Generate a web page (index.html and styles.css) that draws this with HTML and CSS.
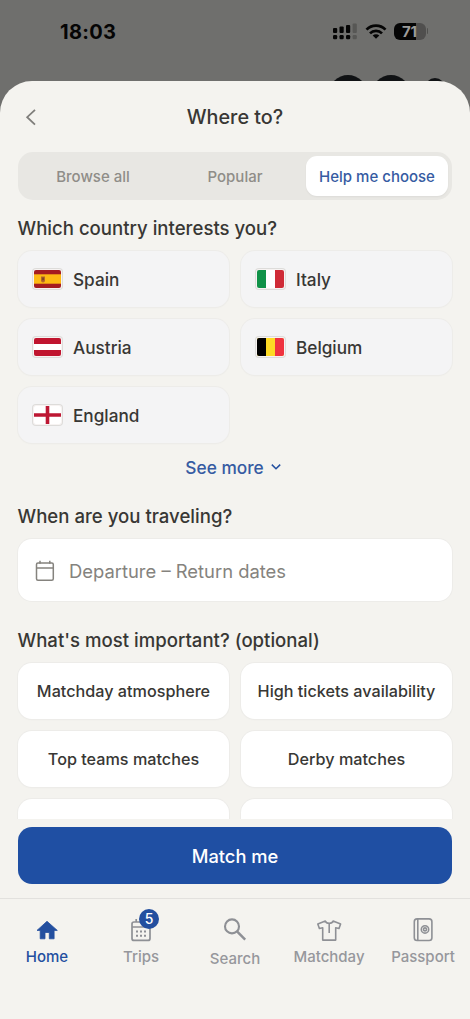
FILE: index.html
```html
<!DOCTYPE html>
<html lang="en">
<head>
<meta charset="utf-8">
<meta name="viewport" content="width=device-width, initial-scale=1">
<title>Where to?</title>
<link rel="stylesheet" href="styles.css">
</head>
<body>
<div class="phone">
  <div class="status">
    <span class="clock">18:03</span>
    <div class="status-icons">
      <svg class="signal" width="25" height="17" viewBox="0 0 25 17"><g fill="#050505"><rect x="0" y="5" width="4.2" height="5" rx="1"/><rect x="6.5" y="3.6" width="4.2" height="6.4" rx="1"/><rect x="13" y="2" width="4.2" height="8" rx="1"/><rect x="0" y="12" width="4.2" height="4.2" rx="1.2"/><rect x="6.5" y="12" width="4.2" height="4.2" rx="1.2"/><rect x="13" y="12" width="4.2" height="4.2" rx="1.2"/></g><g fill="#575755"><rect x="19.6" y="0.5" width="4.2" height="9.5" rx="1"/><rect x="19.6" y="12" width="4.2" height="4.2" rx="1.2"/></g></svg>
      <svg class="wifi" width="22" height="17" viewBox="0 0 22 17"><g fill="none" stroke="#050505" stroke-width="2.7"><path d="M1.5 6.6a13.3 13.3 0 0 1 19 0"/><path d="M5 10.4a8.4 8.4 0 0 1 12 0"/></g><path d="M11 15.8L7.7 12.6a4.6 4.6 0 0 1 6.6 0z" fill="#050505"/></svg>
      <span class="battery"><span class="battery-body">71</span><span class="battery-tip"></span></span>
    </div>
    <svg class="backdrop" width="120" height="10" viewBox="0 0 120 10"><g fill="#101214"><circle cx="18" cy="20" r="19"/><circle cx="61" cy="20" r="19"/><circle cx="105" cy="14" r="10"/></g></svg>
  </div>

  <main class="sheet">
    <header class="header">
      <svg class="back" width="12" height="18" viewBox="0 0 12 18" fill="none" stroke="#7f7e7b" stroke-width="1.8"><path d="M10 1.8L2.2 9.2L10 16.6"/></svg>
      <h1 class="title">Where to?</h1>
    </header>

    <div class="tabs">
      <button class="tab">Browse all</button>
      <button class="tab">Popular</button>
      <button class="tab tab-active">Help me choose</button>
    </div>

    <div class="content">
      <h2 class="question">Which country interests you?</h2>
      <div class="grid">
        <button class="country"><svg class="flag" viewBox="0 0 27 18"><rect width="27" height="18" fill="#a51c20"/><rect y="4.3" width="27" height="9.4" fill="#fdb913"/><path d="M7 6.5h4v4a2 2 0 0 1-4 0z" fill="#b5652b"/><path d="M8.2 7.4h1.7v2.8H8.2z" fill="#7a4324"/></svg>Spain</button>
        <button class="country"><svg class="flag" viewBox="0 0 27 18"><rect width="27" height="18" fill="#fff"/><rect width="9" height="18" fill="#109248"/><rect x="18" width="9" height="18" fill="#cf2b37"/></svg>Italy</button>
        <button class="country"><svg class="flag" viewBox="0 0 27 18"><rect width="27" height="18" fill="#c0152f"/><rect y="6" width="27" height="6" fill="#fff"/></svg>Austria</button>
        <button class="country"><svg class="flag" viewBox="0 0 27 18"><rect width="27" height="18" fill="#fdda25"/><rect width="9" height="18" fill="#000"/><rect x="18" width="9" height="18" fill="#ef3340"/></svg>Belgium</button>
        <button class="country"><svg class="flag" viewBox="0 0 27 18"><rect width="27" height="18" fill="#fff"/><path d="M11.7 0h3.6v7.2H27v3.6H15.3V18h-3.6v-7.2H0V7.2h11.7z" fill="#bd1733"/></svg>England</button>
      </div>
      <button class="more">See more<svg width="10" height="6" viewBox="0 0 10 6" fill="none" stroke="#234f9f" stroke-width="1.5"><path d="M0.8 0.6L5 4.8L9.2 0.6"/></svg></button>

      <h2 class="question question-dates">When are you traveling?</h2>
      <button class="dates">
        <svg width="20" height="22" viewBox="0 0 20 22" fill="none" stroke="#85837e" stroke-width="1.5"><rect x="1.5" y="3" width="16.8" height="17.2" rx="1.5"/><path d="M1.5 8h16.8M5 0.7v3M14.8 0.7v3"/></svg>
        Departure – Return dates
      </button>

      <h2 class="question question-important">What's most important? (optional)</h2>
      <div class="grid">
        <button class="option">Matchday atmosphere</button>
        <button class="option">High tickets availability</button>
        <button class="option">Top teams matches</button>
        <button class="option">Derby matches</button>
        <button class="option" aria-label="More options"></button>
        <button class="option" aria-label="More options"></button>
      </div>
    </div>

    <div class="action"><button class="match">Match me</button></div>

    <nav class="nav">
      <a class="nav-item nav-active"><svg width="24" height="26" viewBox="0 0 24 26"><path d="M12 3.3L2 12.4h3.2v8.4H10v-6.3h4.3v6.3h4.8v-8.4h3.2z" fill="#234f9f" stroke="#234f9f" stroke-width="0.8" stroke-linejoin="round"/></svg>Home</a>
      <a class="nav-item nav-trips">
        <svg width="24" height="26" viewBox="0 0 24 26" fill="none" stroke="#8e9095" stroke-width="1.7"><rect x="3" y="4" width="18" height="18.4" rx="2"/><path d="M3 9h18M7.2 1v3M16.8 1v3"/><path d="M7 13.4h2M11 13.4h2M15 13.4h2M7 17.8h2M11 17.8h2M15 17.8h2" stroke-width="2"/></svg>
        <span class="badge">5</span>Trips</a>
      <a class="nav-item nav-search"><svg width="24" height="26" viewBox="0 0 24 26" fill="none" stroke="#8e9095" stroke-width="2.1"><circle cx="9" cy="8.4" r="7"/><path d="M14 13.4L22.2 21.6" stroke-width="2.5"/></svg>Search</a>
      <a class="nav-item"><svg width="26" height="26" viewBox="0 0 26 26" fill="none" stroke="#8e9095" stroke-width="1.6" stroke-linejoin="round"><path d="M9.3 3L1.8 6L3.4 10.5L6.7 9.7V22.1H19.7V9.7L23 10.5L24.6 6L17.1 3C16.6 4.5 14.8 5.3 13.2 5.3S9.8 4.5 9.3 3z"/><path d="M13.2 5.3v9.7"/></svg>Matchday</a>
      <a class="nav-item"><svg width="24" height="26" viewBox="0 0 24 26" fill="none" stroke="#8e9095" stroke-width="1.6"><rect x="3.3" y="0.9" width="17.6" height="21.6" rx="2.8"/><path d="M6.8 0.9v21.6"/><circle cx="14" cy="11.4" r="3.7"/><circle cx="14" cy="11.4" r="1.5"/></svg>Passport</a>
    </nav>
  </main>
</div>
</body>
</html>
```
FILE: styles.css
```css
* {
  box-sizing: border-box;
}

body {
  margin: 0;
  background: #6f6f6d;
  font-family: Inter, "Liberation Sans", sans-serif;
  color: #383734;
}

button {
  margin: 0;
  padding: 0;
  border: 0;
  font: inherit;
  color: inherit;
  background: none;
}

.phone {
  display: flex;
  flex-direction: column;
  height: 1019px;
  overflow: hidden;
}

.status {
  position: relative;
  display: flex;
  flex: none;
  justify-content: space-between;
  height: 81px;
  padding: 20px 42px 0 60px;
}

.clock {
  font-size: 20px;
  font-weight: 700;
  line-height: 24px;
  letter-spacing: 0.3px;
  color: #050505;
}

.status-icons {
  display: flex;
  align-items: center;
  height: 22px;
}

.wifi {
  margin: 0 7px;
}

.battery {
  display: flex;
  align-items: center;
  gap: 1px;
}

.battery-body {
  width: 32px;
  height: 17px;
  border-radius: 6px;
  background: linear-gradient(90deg, #050505 22px, #504f4e 22px);
  font-size: 15px;
  font-weight: 700;
  line-height: 17px;
  text-align: center;
  color: #9c9c9a;
}

.battery-tip {
  width: 1.5px;
  height: 6px;
  border-radius: 0 2px 2px 0;
  background: #50504e;
}

.backdrop {
  position: absolute;
  right: 20px;
  bottom: -3px;
}

.sheet {
  position: relative;
  display: flex;
  flex: 1;
  flex-direction: column;
  min-height: 0;
  border-radius: 32px 32px 0 0;
  background: #f4f3ef;
}

.header {
  display: flex;
  flex: none;
  align-items: center;
  height: 71px;
}

.back {
  margin-left: 25px;
}

.title {
  flex: 1;
  margin: 0 37px 0 0;
  font-size: 19.8px;
  font-weight: 500;
  text-align: center;
}

.tabs {
  display: flex;
  flex: none;
  height: 48px;
  margin: 0 18px;
  padding: 4px;
  border-radius: 15px;
  background: #e8e7e3;
}

.tab {
  flex: 1;
  border-radius: 11px;
  font-size: 15px;
  font-weight: 500;
  white-space: nowrap;
  color: #8f8d88;
}

.tab-active {
  background: #fff;
  box-shadow: 0 1px 2px rgb(0 0 0 / 5%);
  color: #365ba2;
}

.content {
  flex: none;
  height: 619px;
  padding: 16px 18px 0;
  overflow: hidden;
}

.question {
  margin: 0 0 11px -0.5px;
  font-size: 18.6px;
  font-weight: 500;
  line-height: 24px;
  white-space: nowrap;
}

.grid {
  display: grid;
  grid-template-columns: 1fr 1fr;
  grid-auto-rows: 56px;
  gap: 12px;
}

.country,
.option {
  border-radius: 14px;
  box-shadow: 0 0 0 1px #edece9, 0 1px 2px rgb(0 0 0 / 3%);
  font-weight: 500;
}

.country {
  display: flex;
  align-items: center;
  gap: 12px;
  padding-left: 16px;
  background: #f4f4f5;
  font-size: 17.2px;
}

.flag {
  width: 27px;
  height: 18px;
  border-radius: 2px;
  box-shadow: 0 0 0 1px #f7f3f2, 0 0 0 2px #dddcda;
}

.option {
  background: #fff;
  font-size: 16.2px;
}

.more {
  display: flex;
  align-items: center;
  justify-content: center;
  gap: 7px;
  width: 100%;
  height: 24px;
  margin-top: 12px;
  padding-right: 4px;
  font-size: 17.3px;
  font-weight: 500;
  color: #365ba2;
}

.question-dates {
  margin-top: 25px;
}

.dates {
  display: flex;
  align-items: center;
  gap: 14px;
  width: 100%;
  height: 62px;
  padding: 1px 0 0 17px;
  border-radius: 14px;
  background: #fff;
  box-shadow: 0 0 0 1px #edece9;
  font-size: 18.4px;
  color: #85837e;
}

.question-important {
  margin-top: 27px;
}

.action {
  flex: none;
  padding: 8px 18px 14px;
}

.match {
  display: block;
  width: 100%;
  height: 57px;
  padding-top: 1px;
  border-radius: 14px;
  background: #1f4fa3;
  font-size: 18.3px;
  font-weight: 500;
  color: #fff;
}

.nav {
  display: grid;
  flex: 1;
  grid-template-columns: repeat(5, 94px);
  align-items: start;
  border-top: 1px solid #e2e1de;
}

.nav-item {
  position: relative;
  display: flex;
  flex-direction: column;
  align-items: center;
  gap: 3px;
  padding-top: 19px;
  font-size: 15px;
  font-weight: 500;
  line-height: 20px;
  color: #96979c;
}

.nav-active {
  color: #234f9f;
}

.nav-search {
  gap: 5px;
}

.badge {
  position: absolute;
  top: 10px;
  left: 45px;
  width: 20px;
  height: 20px;
  border-radius: 50%;
  background: #234f9f;
  font-size: 14px;
  text-align: center;
  color: #fff;
}
```
